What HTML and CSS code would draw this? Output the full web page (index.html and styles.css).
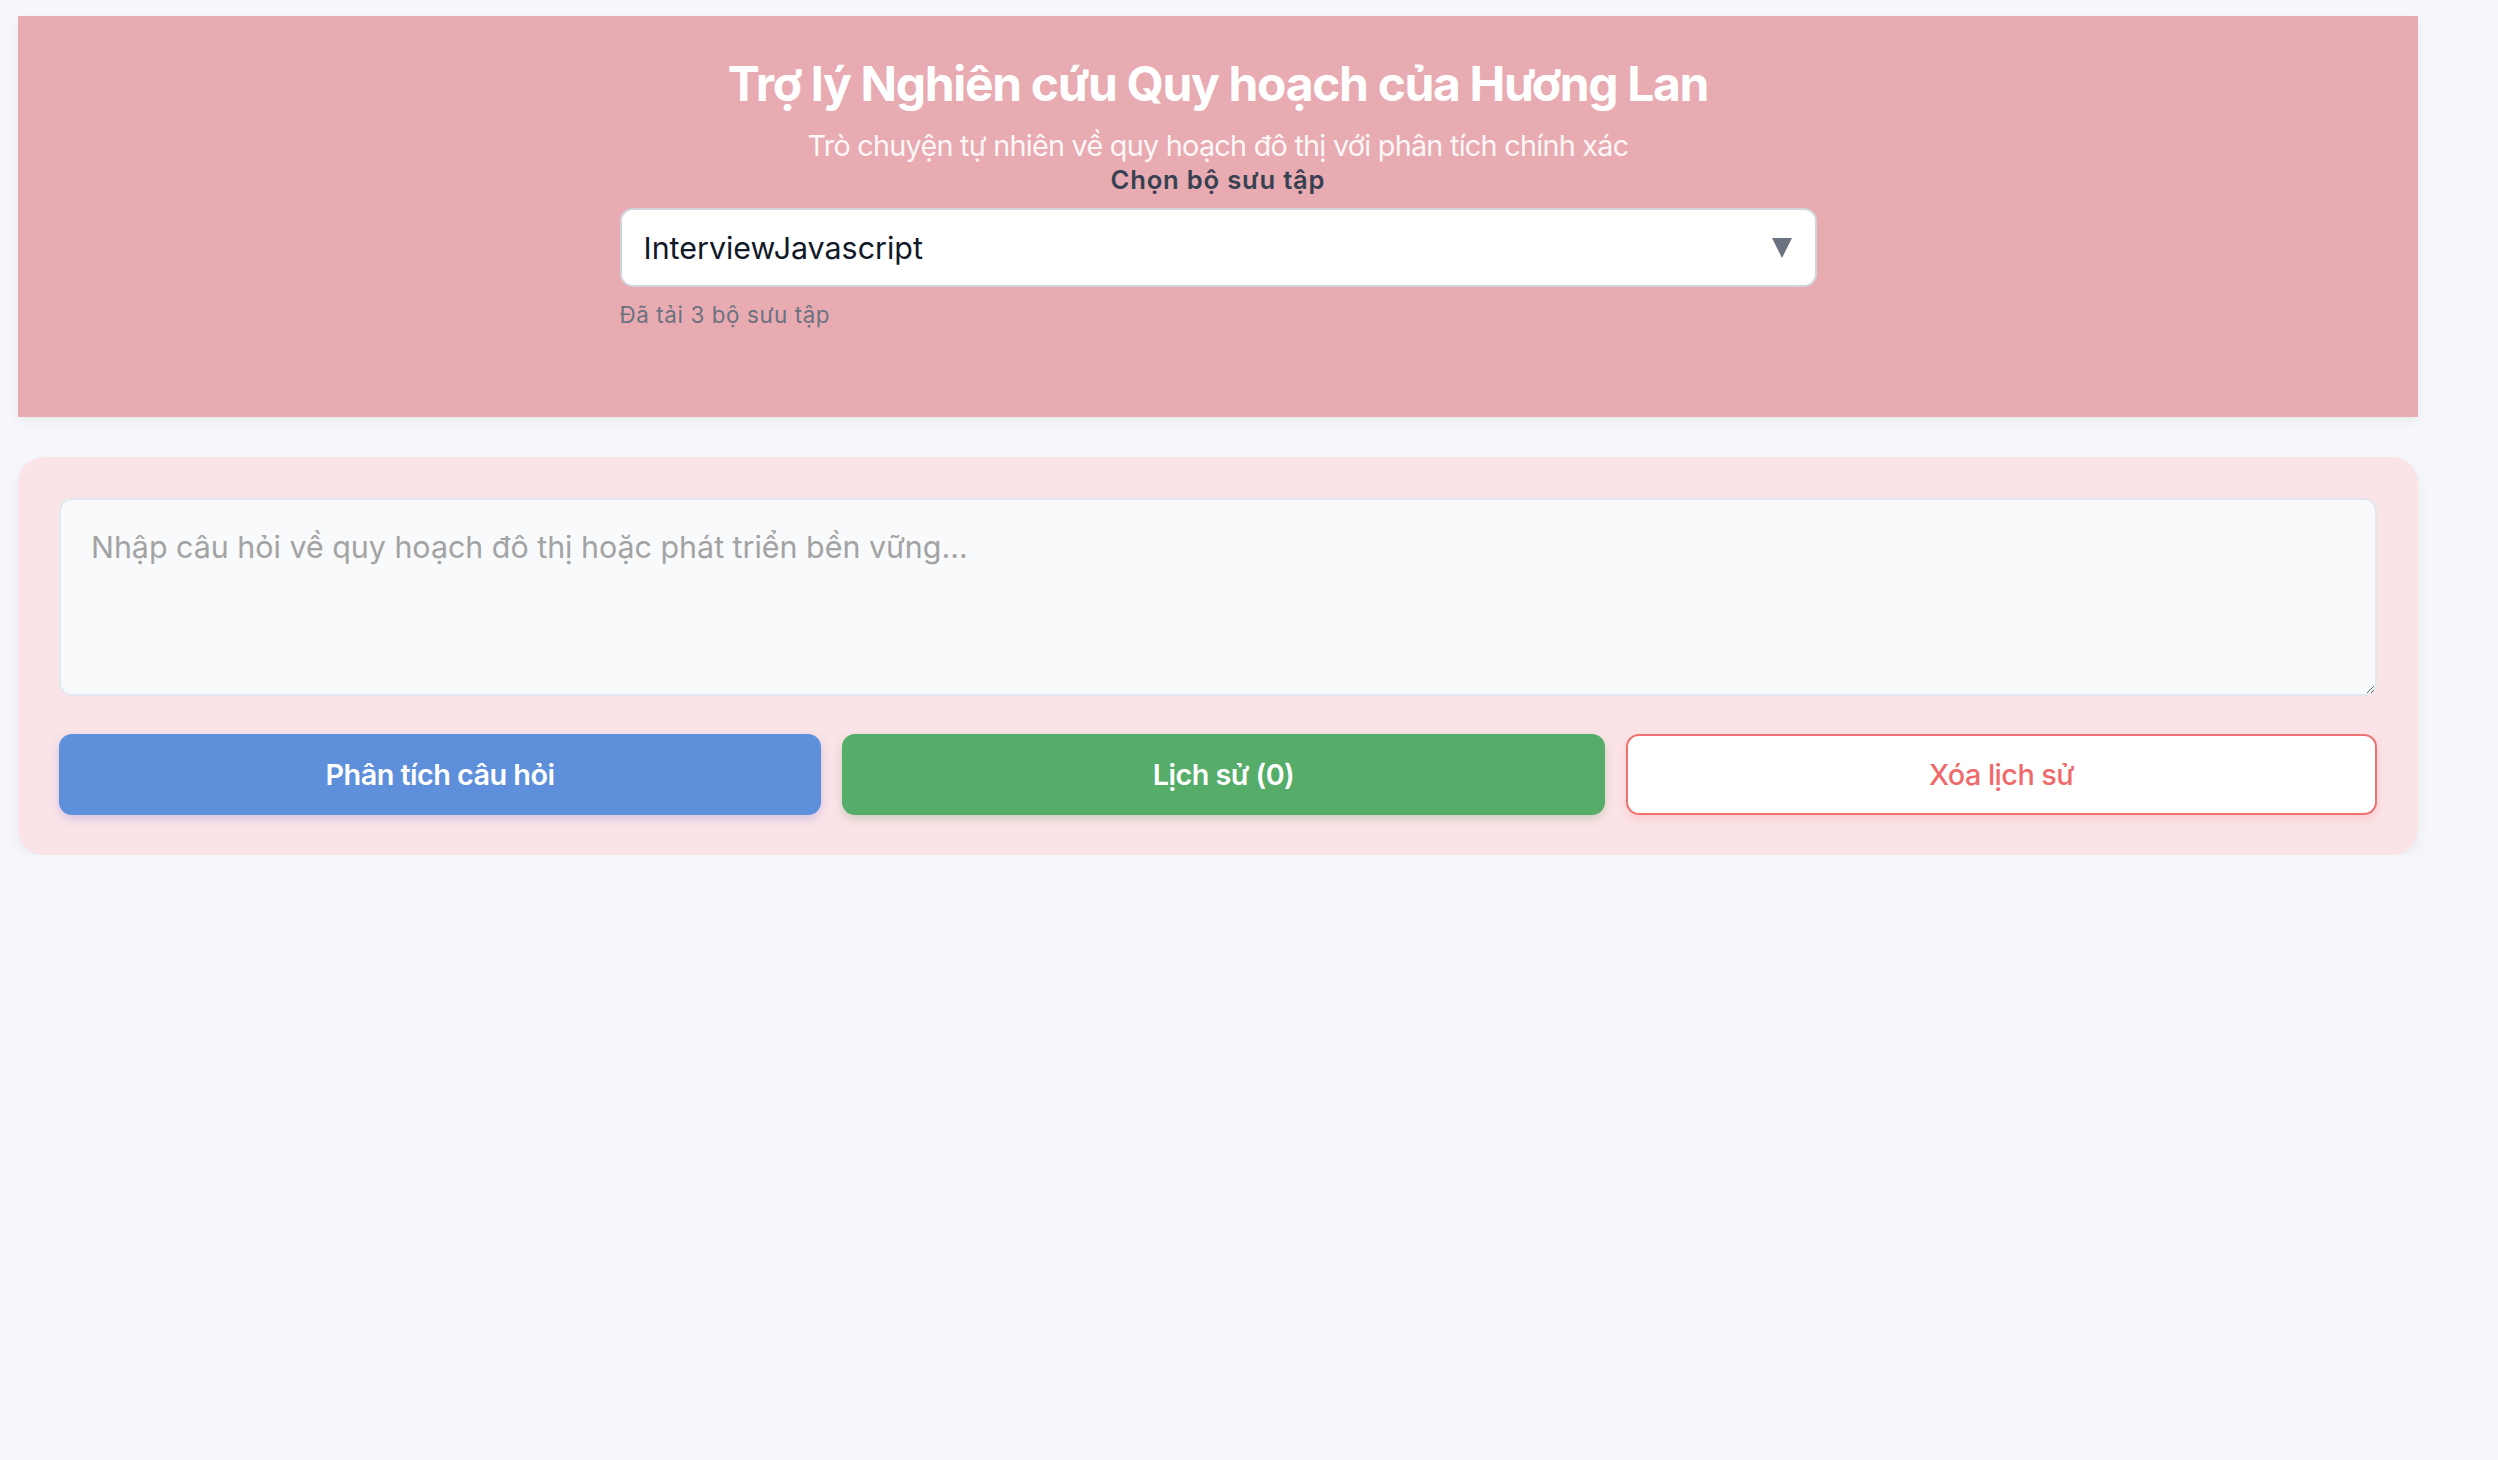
FILE: index.html
```html
<!DOCTYPE html>
<html lang="vi">
<head>
<meta charset="utf-8">
<title>Trợ lý Nghiên cứu Quy hoạch</title>
<link rel="stylesheet" href="styles.css">
</head>
<body>
<div class="page">
  <header class="hero">
    <h1 class="hero-title">Trợ lý Nghiên cứu Quy hoạch của Hương Lan</h1>
    <p class="hero-sub">Trò chuyện tự nhiên về quy hoạch đô thị với phân tích chính xác</p>
    <div class="picker">
      <label class="picker-label" for="collection">Chọn bộ sưu tập</label>
      <div class="select-wrap">
        <select id="collection" class="select">
          <option>InterviewJavascript</option>
        </select>
        <span class="select-arrow"></span>
      </div>
      <p class="picker-status">Đã tải 3 bộ sưu tập</p>
    </div>
  </header>

  <section class="composer">
    <textarea class="question" placeholder="Nhập câu hỏi về quy hoạch đô thị hoặc phát triển bền vững..."></textarea>
    <div class="actions">
      <button class="btn btn-primary">Phân tích câu hỏi</button>
      <button class="btn btn-success">Lịch sử (0)</button>
      <button class="btn btn-outline">Xóa lịch sử</button>
    </div>
  </section>
</div>
</body>
</html>
```
FILE: styles.css
```css
* { box-sizing: border-box; }

html, body {
  margin: 0;
  padding: 0;
  background: #f5f7fa;
  font-family: Inter, "Noto Sans", "Liberation Sans", sans-serif;
}

.page {
  width: 2400px;
  margin: 0 0 0 18px;
  padding-top: 16px;
}

.hero {
  background: #e8abb2;
  height: 401px;
  padding-top: 39px;
  text-align: center;
  box-shadow: 0 4px 10px rgba(0, 0, 0, 0.06);
}

.hero-title {
  margin: 0;
  font-size: 48px;
  line-height: 58px;
  font-weight: 700;
  color: #ffffff;
  letter-spacing: -1.35px;
}

.hero-sub {
  margin: 15px 0 0;
  font-size: 28.8px;
  line-height: 35px;
  color: rgba(255, 255, 255, 0.92);
  letter-spacing: -0.75px;
}

.picker {
  width: 1197px;
  margin: 0 auto;
}

.picker-label {
  display: block;
  margin-top: 1px;
  font-size: 25.6px;
  line-height: 31px;
  font-weight: 600;
  color: #374151;
  letter-spacing: 0.8px;
}

.select-wrap {
  position: relative;
  margin-top: 13px;
}

.select {
  display: block;
  width: 100%;
  height: 79px;
  padding: 0 60px 0 22px;
  border: 2px solid #d1d5db;
  border-radius: 13px;
  background: #ffffff;
  font-family: inherit;
  font-size: 30.4px;
  color: #111827;
  appearance: none;
  -webkit-appearance: none;
  outline: none;
}

.select-arrow {
  position: absolute;
  right: 25px;
  top: 30px;
  width: 0;
  height: 0;
  border-left: 10px solid transparent;
  border-right: 10px solid transparent;
  border-top: 20px solid #6b7280;
  pointer-events: none;
}

.picker-status {
  margin: 15px 0 0;
  text-align: left;
  font-size: 22.4px;
  line-height: 26px;
  color: #6b7280;
  letter-spacing: 0.6px;
}

.composer {
  margin-top: 40px;
  height: 398px;
  background: #fbe4e7;
  border-radius: 26px;
  padding: 41px;
  box-shadow: 0 6px 16px rgba(0, 0, 0, 0.05);
}

.question {
  display: block;
  width: 100%;
  height: 198px;
  padding: 26px 30px;
  border: 2px solid #e2e8f0;
  border-radius: 13px;
  background: #f8fafc;
  font-family: inherit;
  font-size: 30.4px;
  line-height: 43px;
  color: #111827;
  resize: vertical;
  outline: none;
}

.question::placeholder {
  color: #a3a3a3;
}

.actions {
  display: grid;
  grid-template-columns: 762px 763px 1fr;
  gap: 21px;
  margin-top: 38px;
}

.btn {
  height: 81px;
  border-radius: 13px;
  font-family: inherit;
  font-size: 28.8px;
  font-weight: 600;
  letter-spacing: -0.55px;
  cursor: pointer;
}

.btn-primary {
  background: #5d8fdb;
  color: #ffffff;
  border: none;
  box-shadow: 0 4px 10px rgba(93, 100, 219, 0.25);
}

.btn-success {
  background: #55ad69;
  color: #ffffff;
  border: none;
  box-shadow: 0 4px 10px rgba(85, 140, 80, 0.25);
}

.btn-outline {
  background: #ffffff;
  color: #ef6b6b;
  border: 2px solid #ef7272;
  font-weight: 500;
  box-shadow: 0 4px 10px rgba(239, 107, 107, 0.2);
}
```
